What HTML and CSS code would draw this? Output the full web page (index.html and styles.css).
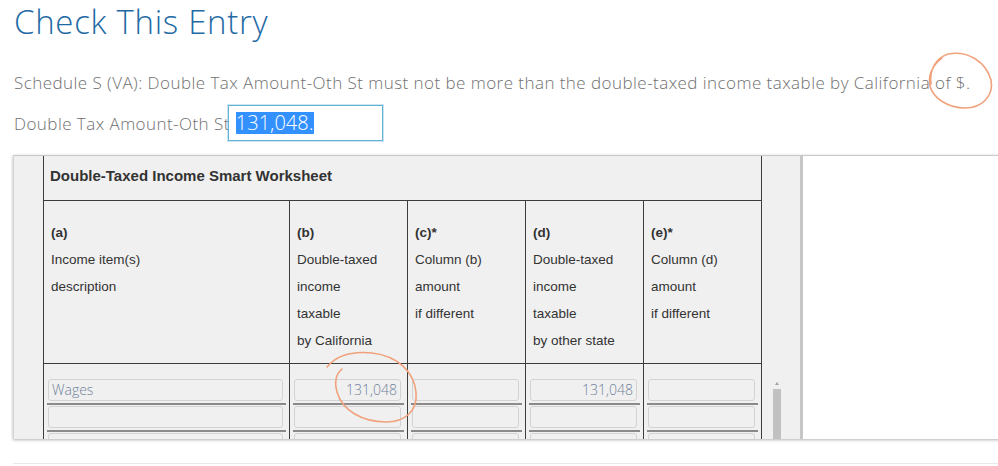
FILE: index.html
```html
<!DOCTYPE html>
<html lang="en">
<head>
    <meta charset="UTF-8">
    <title>Check This Entry</title>
    <link rel="stylesheet" href="styles.css">
</head>
<body>
    <div class="page">
        <h1 class="title">Check This Entry</h1>
        <p class="message">Schedule S (VA): Double Tax Amount-Oth St must not be more than the double-taxed income taxable by California of $.</p>

        <div class="field">
            <span class="field-label">Double Tax Amount-Oth St</span>
            <div class="field-box"><span class="selected">131,048.</span></div>
        </div>

        <!-- Worksheet panel -->
        <div class="panel">
            <div class="worksheet">
                <table class="sheet">
                    <colgroup>
                        <col class="col-a">
                        <col class="col-n">
                        <col class="col-n">
                        <col class="col-n">
                        <col class="col-n">
                    </colgroup>
                    <tr>
                        <th colspan="5" class="sheet-title">Double-Taxed Income Smart Worksheet</th>
                    </tr>
                    <tr class="col-heads">
                        <td><b>(a)</b><br>Income item(s)<br>description</td>
                        <td><b>(b)</b><br>Double-taxed<br>income<br>taxable<br>by California</td>
                        <td><b>(c)*</b><br>Column (b)<br>amount<br>if different</td>
                        <td><b>(d)</b><br>Double-taxed<br>income<br>taxable<br>by other state</td>
                        <td><b>(e)*</b><br>Column (d)<br>amount<br>if different</td>
                    </tr>
                    <tr class="rows">
                        <td>
                            <div class="entry"><div class="cell">Wages</div></div>
                            <div class="entry"><div class="cell"></div></div>
                            <div class="entry"><div class="cell"></div></div>
                        </td>
                        <td>
                            <div class="entry"><div class="cell num">131,048</div></div>
                            <div class="entry"><div class="cell"></div></div>
                            <div class="entry"><div class="cell"></div></div>
                        </td>
                        <td>
                            <div class="entry"><div class="cell"></div></div>
                            <div class="entry"><div class="cell"></div></div>
                            <div class="entry"><div class="cell"></div></div>
                        </td>
                        <td>
                            <div class="entry"><div class="cell num">131,048</div></div>
                            <div class="entry"><div class="cell"></div></div>
                            <div class="entry"><div class="cell"></div></div>
                        </td>
                        <td>
                            <div class="entry"><div class="cell"></div></div>
                            <div class="entry"><div class="cell"></div></div>
                            <div class="entry"><div class="cell"></div></div>
                        </td>
                    </tr>
                </table>
                <div class="scrollbar">
                    <div class="scroll-arrow"></div>
                    <div class="scroll-thumb"></div>
                </div>
            </div>
            <div class="blank"></div>
        </div>

        <div class="footer-line"></div>

        <!-- Hand-drawn marks over the screenshot -->
        <svg class="marks" width="998" height="466" viewBox="0 0 998 466">
            <path d="M931 84 C929 70 936 58 948 54 C968 50 986 62 991 80 C994 96 982 108 965 108 C948 108 933 98 930 86 C928 76 932 66 942 58"/>
            <path d="M327 367 C336 356 352 351 372 353 C398 356 414 372 416 392 C418 412 404 422 386 422 C362 422 342 410 337 392 C334 381 336 374 342 369"/>
        </svg>
    </div>
</body>
</html>
```

FILE: styles.css
```css
* {
    box-sizing: border-box;
    margin: 0;
    padding: 0;
}

body {
    background: #fff;
    overflow: hidden;
    font-family: 'Open Sans', 'Lato', sans-serif;
}

.page {
    position: relative;
    width: 998px;
    height: 466px;
    padding-left: 14px;
}

.title {
    font-size: 33px;
    font-weight: 300;
    line-height: 44px;
    letter-spacing: 0.7px;
    color: #1f6aa5;
}

.message {
    margin-top: 27px;
    font-size: 17px;
    font-weight: 300;
    line-height: 24px;
    letter-spacing: 0.45px;
    color: #707070;
}

.field {
    display: flex;
    align-items: center;
    margin-top: 10px;
    font-size: 17px;
    font-weight: 300;
    letter-spacing: 0.45px;
    color: #707070;
}

.field-box {
    width: 155px;
    height: 36px;
    margin-left: -2px;
    border: 1px solid #65b3d6;
    box-shadow: 0 0 0 1px rgba(101, 179, 214, 0.35);
    padding: 6px 0 0 7px;
    letter-spacing: 0;
}

.selected {
    display: inline-block;
    background: #3390ff;
    color: #fff;
    font-size: 20px;
    line-height: 22px;
    padding-right: 1px;
}

/* Worksheet panel */
.panel {
    display: flex;
    margin-top: 14px;
    margin-left: -1px;
    width: 1000px;
    height: 284px;
    overflow: hidden;
    border-top: 1px solid #c9c9c9;
    box-shadow: 0 1px 3px rgba(0, 0, 0, 0.3);
}

.worksheet {
    display: flex;
    align-items: flex-start;
    flex: none;
    width: 790px;
    background: #f0f0f0;
    border-left: 1px solid #d4d4d4;
    border-right: 3px solid #c6c6c6;
    padding-left: 29px;
}

.blank {
    flex: 1;
    background: #fff;
}

.sheet {
    width: 720px;
    border-collapse: collapse;
    font-family: 'Liberation Sans', Arial, sans-serif;
    font-size: 13.5px;
    color: #333;
    table-layout: fixed;
}

.col-a {
    width: 246px;
}

.col-n {
    width: 118px;
}

.sheet td,
.sheet th {
    border: 1px solid #3c3c3c;
    vertical-align: top;
}

.sheet tr:first-child th {
    border-top: none;
}

.sheet-title {
    text-align: left;
    font-size: 15px;
    font-weight: bold;
    height: 44px;
    padding: 11px 0 0 6px;
    line-height: 18px;
}

.col-heads td {
    line-height: 27px;
    height: 163px;
    padding: 18px 0 0 7px;
}

.rows td {
    padding: 15px 3px 0 3px;
    border-bottom: none;
    height: 100px;
}

.entry {
    margin-bottom: 1px;
}

.cell {
    height: 22px;
    margin: 0 3px 2px 1px;
    border: 1px solid #d3d3d3;
    border-radius: 3px;
    padding: 0 3px;
    font-family: 'Open Sans', sans-serif;
    font-weight: 300;
    font-size: 14px;
    line-height: 20px;
    color: #6f8199;
}

.entry::after {
    content: "";
    display: block;
    height: 2px;
    background: #8a8a8a;
}

.num {
    text-align: right;
}

.scrollbar {
    width: 38px;
    padding: 226px 0 0 11px;
}

.scroll-arrow {
    width: 0;
    height: 0;
    margin: 0 0 4px 2px;
    border-left: 2px solid transparent;
    border-right: 2px solid transparent;
    border-bottom: 3px solid #a3a3a3;
}

.scroll-thumb {
    width: 8px;
    height: 60px;
    background: #c1c1c1;
}

.footer-line {
    margin-top: 24px;
    margin-left: -1px;
    height: 1px;
    background: #e9e9e9;
}

.marks {
    position: absolute;
    left: 0;
    top: 0;
    pointer-events: none;
}

.marks path {
    fill: none;
    stroke: #f0a27c;
    stroke-width: 1.6;
    stroke-linecap: round;
}
```
